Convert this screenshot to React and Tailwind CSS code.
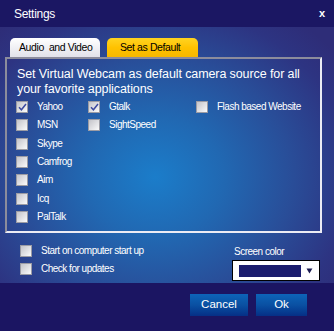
import React from 'react'

const font = { fontFamily: '"Liberation Sans", Arial, sans-serif' }

function Check({ checked, label }) {
  return (
    <div className="flex items-center h-[18.33px] gap-[9px]">
      <div className="w-[12px] h-[12px] shrink-0 border border-[#9c9ca4] bg-gradient-to-br from-[#c4c4ca] to-[#fbfbfb] flex items-center justify-center">
        {checked && (
          <svg width="9" height="9" viewBox="0 0 9 9">
            <path d="M1 4.3 L3.4 6.8 L8 1" fill="none" stroke="#3c4aa0" strokeWidth="1.5" />
          </svg>
        )}
      </div>
      <span className="text-[10px] tracking-[-0.5px] text-white leading-none whitespace-nowrap">{label}</span>
    </div>
  )
}

export default function App() {
  return (
    <div className="w-[334px] h-[331px] flex flex-col overflow-hidden select-none" style={font}>
      <div className="h-[27px] shrink-0 bg-[#1b1763] flex items-center justify-between pl-[14px] pr-[9px] text-white">
        <span className="text-[12px] tracking-[-0.3px]">Settings</span>
        <span className="text-[11px] font-bold">x</span>
      </div>

      <div className="h-[256px] shrink-0 flex flex-col bg-[radial-gradient(ellipse_230px_200px_at_155px_150px,#1b7dca_0%,#2168b2_30%,#294d98_60%,#2d3482_85%,#2e2d78_100%)]">
        <div className="flex pl-[10px] gap-[7px] mt-[11px] h-[19px]">
          <div className="w-[90px] rounded-t-[5px] bg-gradient-to-b from-white to-[#e2e2ea] text-[10.5px] tracking-[-0.4px] text-black flex items-center pl-[9px] whitespace-pre">
            Audio  and Video
          </div>
          <div className="w-[91px] rounded-t-[5px] bg-gradient-to-b from-[#ffd41e] via-[#ffc200] to-[#f7b800] text-[10.5px] tracking-[-0.4px] text-black flex items-center pl-[13px]">
            Set as Default
          </div>
        </div>

        <div className="ml-[5px] w-[317px] h-[176px] border-2 border-t-[#8c8c9c] border-l-[#8c8c9c] border-r-[#ececf4] border-b-[#ececf4] pl-[9px] pt-[8px]">
          <div className="text-[12.5px] leading-[15px] tracking-[-0.1px] text-white whitespace-nowrap ml-[1px]">
            Set Virtual Webcam as default camera source for all
            <br />
            your favorite applications
          </div>
          <div className="flex mt-[1px]">
            <div className="w-[72px] flex flex-col">
              <Check checked label="Yahoo" />
              <Check label="MSN" />
              <Check label="Skype" />
              <Check label="Camfrog" />
              <Check label="Aim" />
              <Check label="Icq" />
              <Check label="PalTalk" />
            </div>
            <div className="w-[108px] flex flex-col">
              <Check checked label="Gtalk" />
              <Check label="SightSpeed" />
            </div>
            <div className="flex flex-col">
              <Check label="Flash based Website" />
            </div>
          </div>
        </div>

        <div className="flex justify-between pl-[20px] pr-[14px] pt-[9px]">
          <div className="flex flex-col">
            <Check label="Start on computer start up" />
            <Check label="Check for updates" />
          </div>
          <div className="flex flex-col pt-[5px]">
            <span className="text-[10px] tracking-[-0.5px] text-white leading-none ml-[2px]">Screen color</span>
            <div className="mt-[3px] w-[88px] h-[21px] bg-white border border-black flex items-center pl-[6px] pr-[6px] gap-[5px]">
              <div className="w-[63px] h-[12px] bg-[#1b1d6e]" />
              <svg width="7" height="6" viewBox="0 0 7 6">
                <path d="M0.5 0.5 H6.5 L3.5 5.5 Z" fill="#1a1a50" />
              </svg>
            </div>
          </div>
        </div>
      </div>

      <div className="flex-1 bg-[#1b1562] flex items-start justify-end pr-[27px] pt-[11px] gap-[8px]">
        <button className="w-[58px] h-[22px] bg-gradient-to-b from-[#0d64b8] via-[#0a50a2] to-[#062f86] text-white text-[11.5px]">
          Cancel
        </button>
        <button className="w-[51px] h-[22px] bg-gradient-to-b from-[#0d64b8] via-[#0a50a2] to-[#062f86] text-white text-[11.5px]">
          Ok
        </button>
      </div>
    </div>
  )
}
